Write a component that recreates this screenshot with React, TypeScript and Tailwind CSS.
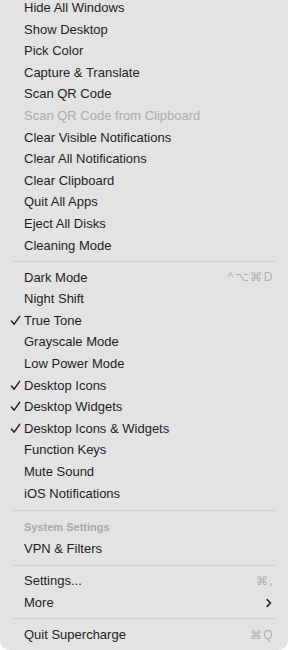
import * as React from "react";

type Item =
  | { kind: "item"; label: string; checked?: boolean; disabled?: boolean; shortcut?: string; submenu?: boolean }
  | { kind: "sep"; tall?: boolean }
  | { kind: "header"; label: string };

const ITEMS: Item[] = [
  { kind: "item", label: "Hide All Windows" },
  { kind: "item", label: "Show Desktop" },
  { kind: "item", label: "Pick Color" },
  { kind: "item", label: "Capture & Translate" },
  { kind: "item", label: "Scan QR Code" },
  { kind: "item", label: "Scan QR Code from Clipboard", disabled: true },
  { kind: "item", label: "Clear Visible Notifications" },
  { kind: "item", label: "Clear All Notifications" },
  { kind: "item", label: "Clear Clipboard" },
  { kind: "item", label: "Quit All Apps" },
  { kind: "item", label: "Eject All Disks" },
  { kind: "item", label: "Cleaning Mode" },
  { kind: "sep" },
  { kind: "item", label: "Dark Mode", shortcut: "^⌥⌘D" },
  { kind: "item", label: "Night Shift" },
  { kind: "item", label: "True Tone", checked: true },
  { kind: "item", label: "Grayscale Mode" },
  { kind: "item", label: "Low Power Mode" },
  { kind: "item", label: "Desktop Icons", checked: true },
  { kind: "item", label: "Desktop Widgets", checked: true },
  { kind: "item", label: "Desktop Icons & Widgets", checked: true },
  { kind: "item", label: "Function Keys" },
  { kind: "item", label: "Mute Sound" },
  { kind: "item", label: "iOS Notifications" },
  { kind: "sep", tall: true },
  { kind: "header", label: "System Settings" },
  { kind: "item", label: "VPN & Filters" },
  { kind: "sep" },
  { kind: "item", label: "Settings...", shortcut: "⌘," },
  { kind: "item", label: "More", submenu: true },
  { kind: "sep" },
  { kind: "item", label: "Quit Supercharge", shortcut: "⌘Q" },
];

function Check() {
  return (
    <svg viewBox="0 0 12 12" className="size-[11px]" aria-hidden="true">
      <path d="M1.5 6.5 L4.5 10 L10.5 1.5" fill="none" stroke="#1f1f1f" strokeWidth="1.6" strokeLinecap="round" strokeLinejoin="round" />
    </svg>
  );
}

function Chevron() {
  return (
    <svg viewBox="0 0 8 12" className="h-[10px] w-[6px]" aria-hidden="true">
      <path d="M1.5 1.5 L6 6 L1.5 10.5" fill="none" stroke="#1f1f1f" strokeWidth="2" strokeLinecap="round" strokeLinejoin="round" />
    </svg>
  );
}

export default function App() {
  return (
    <div className="h-[650px] w-[288px] overflow-hidden bg-white">
      <div
        className="flex h-[650px] flex-col rounded-b-[10px] bg-[#e3e3e3] text-[13px] text-[#1e1e1e]"
        style={{ fontFamily: '"Liberation Sans", Arial, sans-serif' }}
      >
        <div className="-mt-[3px] flex flex-col">
          {ITEMS.map((it, i) => {
            if (it.kind === "sep") {
              return (
                <div key={i} className={`flex items-center px-[13px] ${it.tall ? "h-[12.5px]" : "h-[10.5px]"}`}>
                  <div className="h-px w-full bg-[#cfcfcf]" />
                </div>
              );
            }
            if (it.kind === "header") {
              return (
                <div key={i} className="flex h-[21.6px] items-center pl-[24px] text-[11px] font-bold text-[#a9a9a9]">
                  {it.label}
                </div>
              );
            }
            return (
              <div key={i} className="flex h-[21.6px] items-center">
                <span className="flex w-[24px] justify-end pr-[3px]">{it.checked ? <Check /> : null}</span>
                <span className={it.disabled ? "text-[#acacac]" : ""}>{it.label}</span>
                <span className="ml-auto pr-[14px] text-[12px] tracking-[1.5px] text-[#b0b0b0]">
                  {it.shortcut ?? null}
                  {it.submenu ? <span className="flex pr-[2px]"><Chevron /></span> : null}
                </span>
              </div>
            );
          })}
        </div>
      </div>
    </div>
  );
}
